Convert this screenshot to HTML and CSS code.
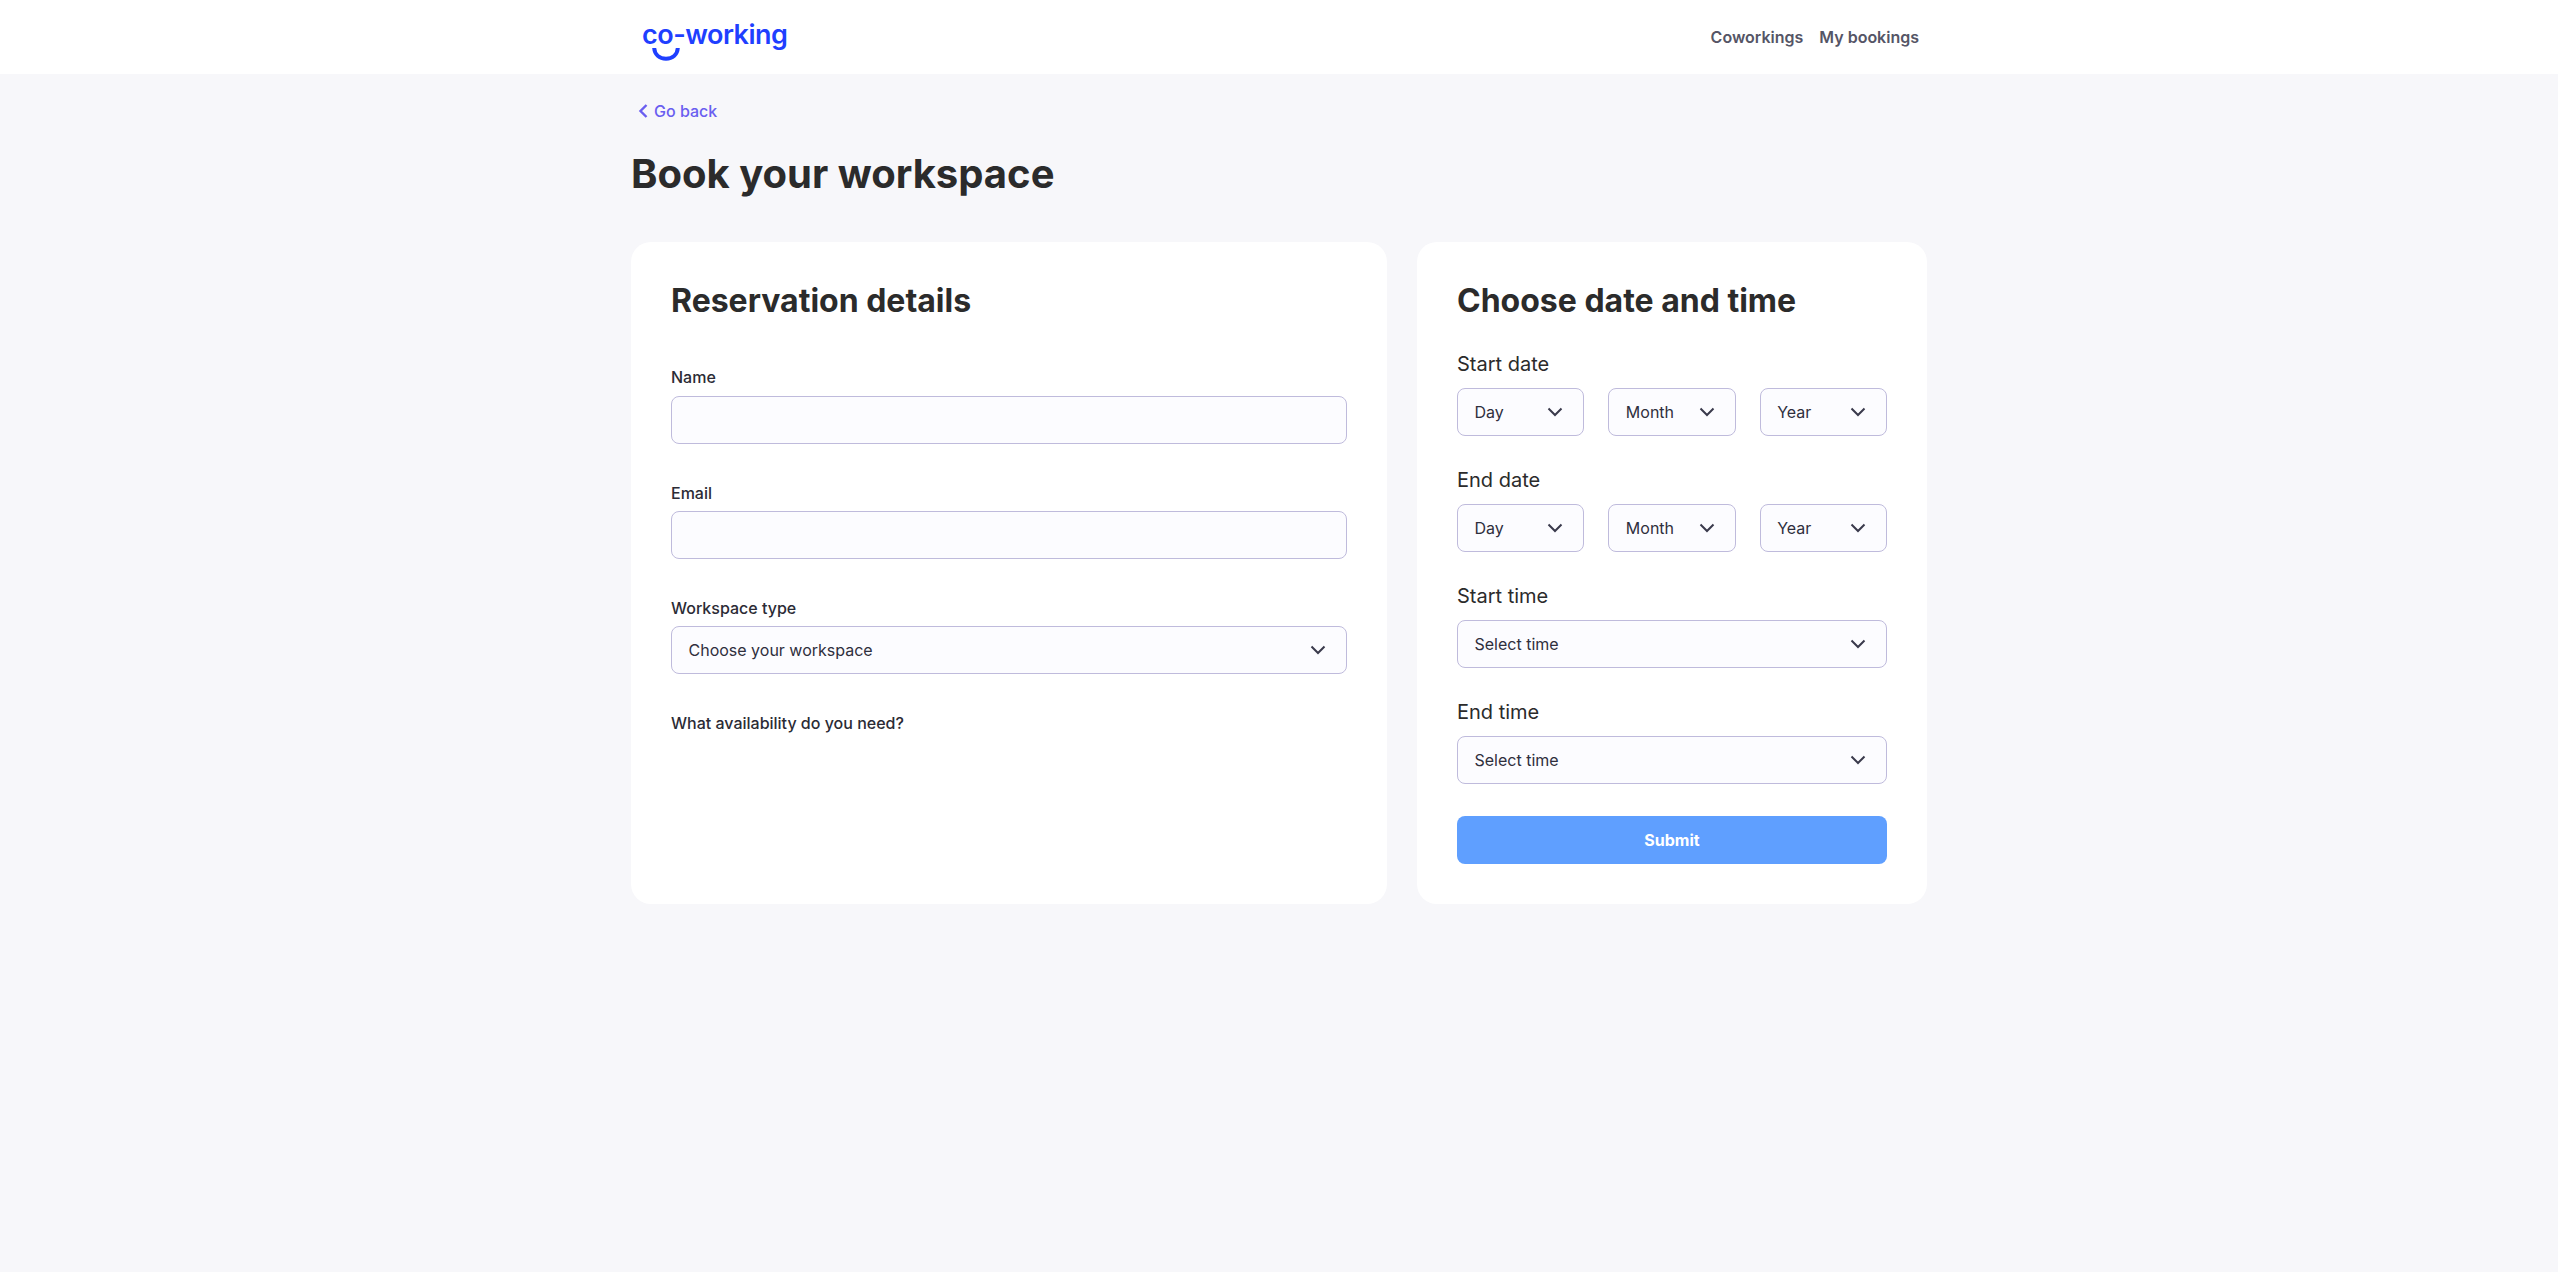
FILE: index.html
```html
<!DOCTYPE html>
<html lang="en">
<head>
    <meta charset="UTF-8">
    <meta name="viewport" content="width=device-width, initial-scale=1.0">
    <title>Book your workspace</title>
    <link rel="stylesheet" href="styles.css">
</head>
<body>
    <header class="topbar">
        <div class="container topbar-inner">
            <a class="logo" href="#">
                <span class="logo-text">co-working</span>
                <svg class="logo-smile" width="28" height="14" viewBox="0 0 28 14" fill="none">
                    <path d="M2.2 1C2.6 7.6 7.4 11.8 14 11.8C20.6 11.8 25.4 7.6 25.8 1" stroke="#1f3fff" stroke-width="4"/>
                </svg>
            </a>
            <nav class="nav">
                <a href="#">Coworkings</a>
                <a href="#">My bookings</a>
            </nav>
        </div>
    </header>

    <main class="container">
        <a class="back" href="#">
            <svg width="11" height="16" viewBox="0 0 11 16" fill="none">
                <path d="M8.5 2L2.5 8L8.5 14" stroke="#6a5ef0" stroke-width="2.4"/>
            </svg>
            Go back
        </a>
        <h1>Book your workspace</h1>

        <div class="cards">
            <form class="card">
                <h2>Reservation details</h2>
                <div class="field">
                    <label for="name">Name</label>
                    <input type="text" id="name">
                </div>
                <div class="field">
                    <label for="email">Email</label>
                    <input type="text" id="email">
                </div>
                <div class="field">
                    <label>Workspace type</label>
                    <button type="button" class="select">
                        <span>Choose your workspace</span>
                        <svg class="chevron" width="16" height="10" viewBox="0 0 16 10" fill="none"><path d="M1.5 1.5L8 8L14.5 1.5" stroke="#3a3a4c" stroke-width="2"/></svg>
                    </button>
                </div>
                <div class="field">
                    <label>What availability do you need?</label>
                </div>
            </form>

            <form class="card">
                <h2>Choose date and time</h2>
                <div class="group">
                    <h3>Start date</h3>
                    <div class="date-row">
                        <button type="button" class="select"><span>Day</span><svg class="chevron" width="16" height="10" viewBox="0 0 16 10" fill="none"><path d="M1.5 1.5L8 8L14.5 1.5" stroke="#3a3a4c" stroke-width="2"/></svg></button>
                        <button type="button" class="select"><span>Month</span><svg class="chevron" width="16" height="10" viewBox="0 0 16 10" fill="none"><path d="M1.5 1.5L8 8L14.5 1.5" stroke="#3a3a4c" stroke-width="2"/></svg></button>
                        <button type="button" class="select"><span>Year</span><svg class="chevron" width="16" height="10" viewBox="0 0 16 10" fill="none"><path d="M1.5 1.5L8 8L14.5 1.5" stroke="#3a3a4c" stroke-width="2"/></svg></button>
                    </div>
                </div>
                <div class="group">
                    <h3>End date</h3>
                    <div class="date-row">
                        <button type="button" class="select"><span>Day</span><svg class="chevron" width="16" height="10" viewBox="0 0 16 10" fill="none"><path d="M1.5 1.5L8 8L14.5 1.5" stroke="#3a3a4c" stroke-width="2"/></svg></button>
                        <button type="button" class="select"><span>Month</span><svg class="chevron" width="16" height="10" viewBox="0 0 16 10" fill="none"><path d="M1.5 1.5L8 8L14.5 1.5" stroke="#3a3a4c" stroke-width="2"/></svg></button>
                        <button type="button" class="select"><span>Year</span><svg class="chevron" width="16" height="10" viewBox="0 0 16 10" fill="none"><path d="M1.5 1.5L8 8L14.5 1.5" stroke="#3a3a4c" stroke-width="2"/></svg></button>
                    </div>
                </div>
                <div class="group">
                    <h3>Start time</h3>
                    <button type="button" class="select"><span>Select time</span><svg class="chevron" width="16" height="10" viewBox="0 0 16 10" fill="none"><path d="M1.5 1.5L8 8L14.5 1.5" stroke="#3a3a4c" stroke-width="2"/></svg></button>
                </div>
                <div class="group">
                    <h3>End time</h3>
                    <button type="button" class="select"><span>Select time</span><svg class="chevron" width="16" height="10" viewBox="0 0 16 10" fill="none"><path d="M1.5 1.5L8 8L14.5 1.5" stroke="#3a3a4c" stroke-width="2"/></svg></button>
                </div>
                <button type="submit" class="submit">Submit</button>
            </form>
        </div>
    </main>
</body>
</html>
```

FILE: styles.css
```css
* {
    box-sizing: border-box;
}

body {
    font-family: Inter, "Liberation Sans", sans-serif;
    background-color: #f7f7fa;
    color: #2b2b2b;
    margin: 0;
}

a {
    text-decoration: none;
}

.container {
    width: 1296px;
    margin: 0 auto;
}

.topbar {
    background: white;
    height: 74px;
}

.topbar-inner {
    display: flex;
    justify-content: space-between;
    align-items: center;
    height: 100%;
    padding: 0 8px 0 11px;
}

.logo {
    position: relative;
    display: block;
    margin-top: -4px;
    color: #1f3fff;
}

.logo-text {
    font-family: Inter, sans-serif;
    font-size: 27px;
    font-weight: 600;
    line-height: 36px;
    letter-spacing: -0.5px;
}

.logo-smile {
    position: absolute;
    left: 10px;
    top: 30px;
}

.nav {
    display: flex;
    gap: 16px;
}

.nav a {
    color: #555566;
    font-size: 16px;
    font-weight: 600;
    line-height: 24px;
}

.back {
    display: flex;
    align-items: center;
    gap: 5px;
    margin: 25px 0 0 7px;
    color: #6a5ef0;
    font-size: 16px;
    font-weight: 500;
    line-height: 24px;
}

h1 {
    margin: 27px 0 44px;
    font-size: 40px;
    font-weight: 700;
    line-height: 48px;
}

.cards {
    display: grid;
    grid-template-columns: 756px 510px;
    gap: 30px;
}

.card {
    background: white;
    border-radius: 20px;
    padding: 40px;
}

h2 {
    margin: 0 0 32px;
    font-size: 32px;
    font-weight: 700;
    line-height: 38px;
}

.card:first-child h2 {
    margin-bottom: 45px;
}

.field {
    margin-bottom: 37px;
}

.field:last-child {
    margin-bottom: 0;
}

label {
    display: block;
    margin-bottom: 6px;
    font-size: 16px;
    font-weight: 500;
    line-height: 24px;
    color: #2b2b35;
}

h2 + .field label {
    margin-bottom: 7px;
}

input,
.select {
    width: 100%;
    height: 48px;
    background-color: #fcfcff;
    border: 1.5px solid #bfbbdc;
    border-radius: 8px;
}

.select {
    display: flex;
    justify-content: space-between;
    align-items: center;
    padding: 0 20px 0 16.5px;
    font-family: inherit;
    font-size: 16px;
    color: #2f2f3d;
}

.group {
    margin-bottom: 32px;
}

h3 {
    margin: 0 0 12px;
    font-size: 20px;
    font-weight: 400;
    line-height: 24px;
}

.date-row {
    display: grid;
    grid-template-columns: repeat(3, 1fr);
    gap: 24px;
}

.submit {
    display: block;
    width: 100%;
    height: 48px;
    background-color: #5f9fff;
    border: none;
    border-radius: 8px;
    color: white;
    font-family: inherit;
    font-size: 16px;
    font-weight: 700;
}
```
